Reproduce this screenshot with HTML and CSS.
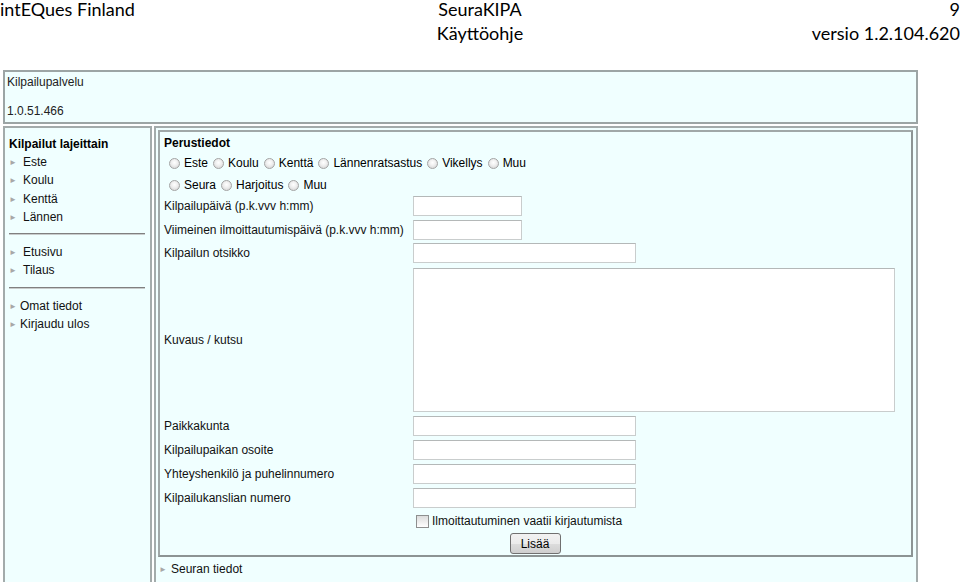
FILE: index.html
```html
<!DOCTYPE html>
<html lang="fi">
<head>
  <meta charset="UTF-8" />
  <title>SeuraKIPA - Käyttöohje</title>
  <link rel="stylesheet" href="styles.css">
</head>
<body>
  <div class="doc-header">
    <div class="doc-left">
      <span class="doc-line">intEQues Finland</span>
    </div>
    <div class="doc-center">
      <span class="doc-line">SeuraKIPA</span>
      <span class="doc-line">Käyttöohje</span>
    </div>
    <div class="doc-right">
      <span class="doc-line">9</span>
      <span class="doc-line">versio 1.2.104.620</span>
    </div>
  </div>

  <div class="app">
    <div class="top-box">
      <p>Kilpailupalvelu</p>
      <p>1.0.51.466</p>
    </div>

    <div class="columns">
      <div class="nav">
        <h3>Kilpailut lajeittain</h3>
        <ul>
          <li><span class="arrow">&#9658;</span>Este</li>
          <li><span class="arrow">&#9658;</span>Koulu</li>
          <li><span class="arrow">&#9658;</span>Kenttä</li>
          <li><span class="arrow">&#9658;</span>Lännen</li>
        </ul>
        <hr>
        <ul>
          <li><span class="arrow">&#9658;</span>Etusivu</li>
          <li><span class="arrow">&#9658;</span>Tilaus</li>
        </ul>
        <hr>
        <ul class="tight">
          <li><span class="arrow">&#9658;</span>Omat tiedot</li>
          <li><span class="arrow">&#9658;</span>Kirjaudu ulos</li>
        </ul>
      </div>

      <div class="main">
        <form class="fieldset">
          <h3>Perustiedot</h3>
          <div class="radio-row">
            <label><input type="radio" name="laji">Este</label>
            <label><input type="radio" name="laji">Koulu</label>
            <label><input type="radio" name="laji">Kenttä</label>
            <label><input type="radio" name="laji">Lännenratsastus</label>
            <label><input type="radio" name="laji">Vikellys</label>
            <label><input type="radio" name="laji">Muu</label>
          </div>
          <div class="radio-row">
            <label><input type="radio" name="tyyppi">Seura</label>
            <label><input type="radio" name="tyyppi">Harjoitus</label>
            <label><input type="radio" name="tyyppi">Muu</label>
          </div>

          <div class="row">
            <span>Kilpailupäivä (p.k.vvv h:mm)</span>
            <input type="text" class="short">
          </div>
          <div class="row row-tight">
            <span>Viimeinen ilmoittautumispäivä (p.k.vvv h:mm)</span>
            <input type="text" class="short">
          </div>
          <div class="row">
            <span>Kilpailun otsikko</span>
            <input type="text" class="medium">
          </div>
          <div class="row">
            <span>Kuvaus / kutsu</span>
            <textarea></textarea>
          </div>
          <div class="row">
            <span>Paikkakunta</span>
            <input type="text" class="medium">
          </div>
          <div class="row">
            <span>Kilpailupaikan osoite</span>
            <input type="text" class="medium">
          </div>
          <div class="row">
            <span>Yhteyshenkilö ja puhelinnumero</span>
            <input type="text" class="medium">
          </div>
          <div class="row">
            <span>Kilpailukanslian numero</span>
            <input type="text" class="medium">
          </div>
          <div class="row check-row">
            <span></span>
            <label><input type="checkbox">Ilmoittautuminen vaatii kirjautumista</label>
          </div>
          <div class="btn-container">
            <button type="button">Lisää</button>
          </div>
        </form>
        <div class="section-link"><span class="arrow">&#9658;</span>Seuran tiedot</div>
      </div>
    </div>
  </div>
</body>
</html>
```

FILE: styles.css
```css
body {
  margin: 0;
  background-color: #ffffff;
  color: #000;
  font-family: 'Liberation Sans', Arial, sans-serif;
  font-size: 12px;
  overflow: hidden;
}

.doc-header {
  display: flex;
  justify-content: space-between;
  height: 70px;
  font-family: Lato, 'Open Sans', sans-serif;
  font-size: 18px;
}

.doc-line {
  display: block;
  line-height: 19px;
}

.doc-line + .doc-line {
  margin-top: 5px;
}

.doc-left,
.doc-right {
  width: 300px;
}

.doc-center {
  text-align: center;
}

.doc-right {
  text-align: right;
}

.app {
  margin-left: 3px;
  width: 915px;
}

.top-box {
  background-color: #f0ffff;
  border: 2px solid #9ca5a5;
  height: 49px;
  padding: 1px 0 0 2px;
}

.top-box p {
  margin: 0;
  line-height: 18px;
  color: #222;
}

.top-box p + p {
  margin-top: 11px;
}

.columns {
  display: flex;
  gap: 2px;
  margin-top: 2px;
}

.nav {
  width: 145px;
  height: 470px;
  background-color: #f0ffff;
  border: 2px solid #a3abab;
}

.nav h3 {
  margin: 8px 0 1px 4px;
  font-size: 12px;
  line-height: 16px;
}

.nav ul {
  list-style: none;
  margin: 0;
  padding: 0 0 0 4px;
}

.nav li {
  height: 18.3px;
  line-height: 18px;
  color: #111;
}

.arrow {
  display: inline-block;
  font-size: 8px;
  line-height: 1;
  color: #a8a8a8;
  width: 14px;
  vertical-align: 1px;
}

.nav ul.tight .arrow {
  width: 11px;
}

.nav hr {
  margin: 7px 5px 8px 4px;
  border: none;
  border-top: 1px solid #808080;
  border-bottom: 1px solid #c8cccc;
  height: 0;
}

.main {
  flex: 1;
  height: 470px;
  background-color: #f0ffff;
  border: 2px solid #a3abab;
  padding: 2px 3px 0 2px;
}

.fieldset {
  border: 2px solid #a0a8a8;
  border-right-color: #8c9494;
  border-bottom-color: #8c9494;
  padding: 2px 5px 1px 4px;
}

.fieldset h3 {
  margin: 0;
  font-size: 12px;
  line-height: 18px;
}

.radio-row {
  display: flex;
  align-items: center;
  height: 22px;
  padding-left: 5px;
}

.radio-row label {
  display: flex;
  align-items: center;
  margin-right: 5px;
}

input[type="radio"] {
  appearance: none;
  width: 11px;
  height: 11px;
  margin: 0 4px 0 0;
  border: 1px solid #a4a4a4;
  border-radius: 50%;
  background: radial-gradient(circle at 50% 40%, #ffffff 0, #f0f0f0 40%, #cfcfcf 100%);
}

.row {
  display: grid;
  grid-template-columns: 249px 1fr;
  align-items: center;
  margin-bottom: 4px;
  color: #111;
}

.row-tight {
  margin-bottom: 3px;
}

input[type="text"],
textarea {
  box-sizing: border-box;
  height: 20px;
  margin: 0;
  border: 1px solid #c9cdcd;
  border-top-color: #b4b8b8;
  background-color: #ffffff;
  font-family: inherit;
  font-size: 12px;
}

input.short {
  width: 109px;
}

input.medium {
  width: 223px;
}

textarea {
  display: block;
  width: 482px;
  height: 144px;
  resize: none;
  margin-top: 1px;
}

.check-row {
  margin-top: 6px;
  margin-bottom: 0;
}

.check-row label {
  display: flex;
  align-items: center;
}

input[type="checkbox"] {
  appearance: none;
  width: 13px;
  height: 13px;
  margin: 0 3px 0 3px;
  border: 1px solid #8e8f8f;
  background: linear-gradient(#dcdcdc, #ffffff);
}

.btn-container {
  display: flex;
  justify-content: center;
  margin-top: 5px;
}

button {
  width: 51px;
  height: 21px;
  padding: 0;
  border: 1px solid #707070;
  border-radius: 3px;
  background: linear-gradient(#f2f2f2 0, #ebebeb 50%, #dddddd 51%, #cfcfcf 100%);
  font-family: inherit;
  font-size: 12px;
  color: #000;
}

.section-link {
  padding: 2px 0 0 1px;
  line-height: 20px;
  color: #111;
}

.section-link .arrow {
  width: 12px;
}
```
